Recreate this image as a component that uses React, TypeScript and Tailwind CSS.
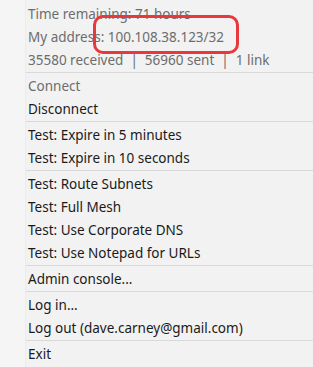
import React from 'react'

type Entry =
  | { kind: 'info'; label: string }
  | { kind: 'item'; label: string; disabled?: boolean }
  | { kind: 'sep' }

const entries: Entry[] = [
  { kind: 'info', label: 'Time remaining: 71 hours' },
  { kind: 'info', label: 'My address: 100.108.38.123/32' },
  { kind: 'info', label: '35580 received  |  56960 sent  |  1 link' },
  { kind: 'sep' },
  { kind: 'item', label: 'Connect', disabled: true },
  { kind: 'item', label: 'Disconnect' },
  { kind: 'sep' },
  { kind: 'item', label: 'Test: Expire in 5 minutes' },
  { kind: 'item', label: 'Test: Expire in 10 seconds' },
  { kind: 'sep' },
  { kind: 'item', label: 'Test: Route Subnets' },
  { kind: 'item', label: 'Test: Full Mesh' },
  { kind: 'item', label: 'Test: Use Corporate DNS' },
  { kind: 'item', label: 'Test: Use Notepad for URLs' },
  { kind: 'sep' },
  { kind: 'item', label: 'Admin console...' },
  { kind: 'sep' },
  { kind: 'item', label: 'Log in...' },
  { kind: 'item', label: 'Log out (dave.carney@gmail.com)' },
  { kind: 'sep' },
  { kind: 'item', label: 'Exit' }
]

const App = () => {
  return (
    <div
      className="relative w-[313px] h-[367px] overflow-hidden bg-[#f2f2f2] text-[13.5px]"
      style={{ fontFamily: '"Segoe UI", "Noto Sans", sans-serif' }}
    >
      {/* Icon gutter */}
      <div className="absolute inset-y-0 left-0 w-[26px] bg-[#f5f5f5] border-r border-[#ececec]" />

      <div className="relative flex flex-col pt-[3px]">
        {entries.map((entry, i) => {
          if (entry.kind === 'sep') {
            return (
              <div key={i} className="pl-[26px] pb-[2px]">
                <div className="h-px bg-[#d9d9d9]" />
              </div>
            )
          }
          const gray = entry.kind === 'info' || (entry.kind === 'item' && entry.disabled)
          return (
            <div
              key={i}
              className={`h-[23px] flex items-center pl-[28px] whitespace-pre ${
                gray ? 'text-[#6d6d6d]' : 'text-[#1a1a1a]'
              }`}
            >
              {entry.label}
            </div>
          )
        })}
      </div>

      {/* Highlight annotation */}
      <div className="absolute left-[93px] top-[15px] w-[146px] h-[39px] rounded-[10px] border-[3.5px] border-[#e8383d]" />
    </div>
  )
}

export default App
